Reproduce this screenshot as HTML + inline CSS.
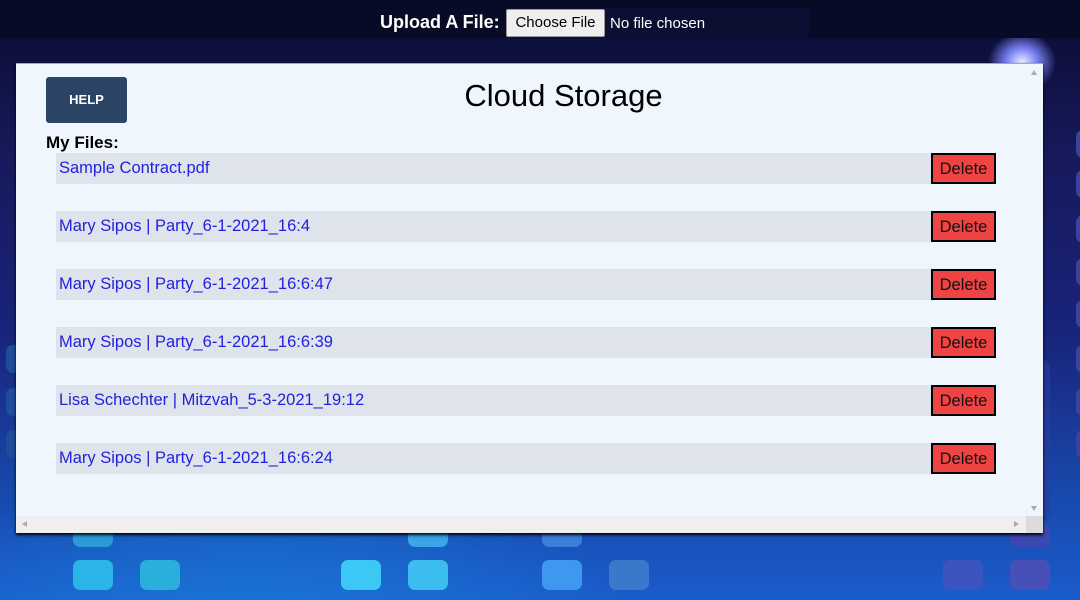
<!DOCTYPE html>
<html><head><meta charset="utf-8"><style>
*{margin:0;padding:0;box-sizing:border-box}
body{width:1080px;height:600px;overflow:hidden;position:relative;font-family:"Liberation Sans",sans-serif;
background:linear-gradient(180deg,#0c0f3a 38px,#17195a 150px,#18237a 330px,#1846a8 480px,#1a5ccc 600px);}
.bgglow{position:absolute;left:0;top:38px;width:1080px;height:562px;
background:radial-gradient(ellipse 34px 30px at 1022px 24px,#e8ecff 0,#7a80f4 45%,transparent 100%),
radial-gradient(ellipse 400px 200px at 250px 620px,#1a7ad8 0,transparent 100%);}
.top{position:absolute;left:0;top:0;width:1080px;height:38px;background:#070b25}
.inbg{position:absolute;left:506px;top:8px;width:303px;height:30px;background:#0b1033}
.lbl{position:absolute;left:380px;top:12px;color:#fff;font-weight:bold;font-size:18px}
.cf{position:absolute;left:506px;top:9px;width:99px;height:28px;background:#efefef;border:1px solid #999;border-radius:2px;font-size:15px;color:#000;text-align:center;line-height:26px}
.nf{position:absolute;left:610px;top:15px;color:#fff;font-size:15px}
.sq{position:absolute;border-radius:7px}
.panel{position:absolute;left:16px;top:63px;width:1027px;height:470px;background:#f0f6fe;box-shadow:0 2px 3px #000;border-top:1px solid #9ab}
.sb{position:absolute;right:0;top:0;width:17px;height:453px;background:#f0f6fe}
.hb{position:absolute;left:0;bottom:0;width:1027px;height:17px;background:#efefef}
.help{position:absolute;left:30px;top:13px;width:81px;height:46px;background:#2c4466;border-radius:3px;color:#fff;font-weight:bold;font-size:13px;text-align:center;line-height:46px}
h1{position:absolute;left:0;width:1095px;top:14px;text-align:center;font-weight:normal;font-size:31px;color:#000}
.mf{position:absolute;left:30px;top:69px;font-weight:bold;font-size:17px;color:#000}
.row{position:absolute;left:40px;width:875px;height:31px;background:#dee3ec}
.row a{position:absolute;left:3px;top:6px;font-size:16.5px;color:#2222dd;text-decoration:none;white-space:nowrap}
.del{position:absolute;left:915px;width:65px;height:31px;background:#ef4444;border:2px solid #000;font-size:16.5px;color:#111;text-align:center;line-height:29px}
</style></head><body>
<div class="bgglow"></div>
<div class="sq" style="left:73px;top:560px;width:40px;height:30px;background:#2bb5e6"></div>
<div class="sq" style="left:140px;top:560px;width:40px;height:30px;background:#2aaedc"></div>
<div class="sq" style="left:341px;top:560px;width:40px;height:30px;background:#3cc8f5"></div>
<div class="sq" style="left:408px;top:560px;width:40px;height:30px;background:#3cbdf0"></div>
<div class="sq" style="left:542px;top:560px;width:40px;height:30px;background:#3f98f0"></div>
<div class="sq" style="left:609px;top:560px;width:40px;height:30px;background:#3a78cc"></div>
<div class="sq" style="left:943px;top:560px;width:40px;height:30px;background:#3c54c0"></div>
<div class="sq" style="left:1010px;top:560px;width:40px;height:30px;background:#4650b8"></div>
<div class="sq" style="left:73px;top:525px;width:40px;height:22px;background:#2a9bd8"></div>
<div class="sq" style="left:408px;top:525px;width:40px;height:22px;background:#3aa5e8"></div>
<div class="sq" style="left:542px;top:525px;width:40px;height:22px;background:#3a80d8"></div>
<div class="sq" style="left:1010px;top:525px;width:40px;height:22px;background:#3c48b0"></div>
<div class="sq" style="left:6px;top:345px;width:20px;height:28px;background:#1f4c9c"></div>
<div class="sq" style="left:6px;top:388px;width:20px;height:28px;background:#1f4c9c"></div>
<div class="sq" style="left:6px;top:430px;width:20px;height:28px;background:#1f4c9c"></div>
<div class="sq" style="left:1076px;top:130px;width:20px;height:28px;background:#3c42a0"></div>
<div class="sq" style="left:1076px;top:170px;width:20px;height:28px;background:#3c42a0"></div>
<div class="sq" style="left:1076px;top:215px;width:20px;height:28px;background:#3c42a0"></div>
<div class="sq" style="left:1076px;top:258px;width:20px;height:28px;background:#3c42a0"></div>
<div class="sq" style="left:1076px;top:300px;width:20px;height:28px;background:#3c42a0"></div>
<div class="sq" style="left:1076px;top:345px;width:20px;height:28px;background:#3c42a0"></div>
<div class="sq" style="left:1076px;top:388px;width:20px;height:28px;background:#3c42a0"></div>
<div class="sq" style="left:1076px;top:430px;width:20px;height:28px;background:#3c42a0"></div>
<div class="sq" style="left:1010px;top:360px;width:40px;height:160px;background:#2d3aa0;opacity:.6"></div>
<div class="top"></div><div class="inbg"></div>
<div class="lbl">Upload A File:</div>
<div class="cf">Choose File</div>
<div class="nf">No file chosen</div>
<div class="panel">
<div class="sb"><div style="position:absolute;left:5px;top:6px;width:0;height:0;border-left:3px solid transparent;border-right:3px solid transparent;border-bottom:5px solid #aaa"></div><div style="position:absolute;left:5px;bottom:6px;width:0;height:0;border-left:3px solid transparent;border-right:3px solid transparent;border-top:5px solid #aaa"></div></div>
<div class="hb"><div style="position:absolute;left:6px;top:5px;border-top:3px solid transparent;border-bottom:3px solid transparent;border-right:5px solid #aaa"></div><div style="position:absolute;right:24px;top:5px;border-top:3px solid transparent;border-bottom:3px solid transparent;border-left:5px solid #aaa"></div><div style="position:absolute;right:0;top:0;width:17px;height:17px;background:#dcdcdc"></div></div>
<div class="help">HELP</div>
<h1>Cloud Storage</h1>
<div class="mf">My Files:</div>
<div class="row" style="top:89px"><a>Sample Contract.pdf</a></div><div class="del" style="top:89px">Delete</div>
<div class="row" style="top:147px"><a>Mary Sipos | Party_6-1-2021_16:4</a></div><div class="del" style="top:147px">Delete</div>
<div class="row" style="top:205px"><a>Mary Sipos | Party_6-1-2021_16:6:47</a></div><div class="del" style="top:205px">Delete</div>
<div class="row" style="top:263px"><a>Mary Sipos | Party_6-1-2021_16:6:39</a></div><div class="del" style="top:263px">Delete</div>
<div class="row" style="top:321px"><a>Lisa Schechter | Mitzvah_5-3-2021_19:12</a></div><div class="del" style="top:321px">Delete</div>
<div class="row" style="top:379px"><a>Mary Sipos | Party_6-1-2021_16:6:24</a></div><div class="del" style="top:379px">Delete</div>
</div>
</body></html>
